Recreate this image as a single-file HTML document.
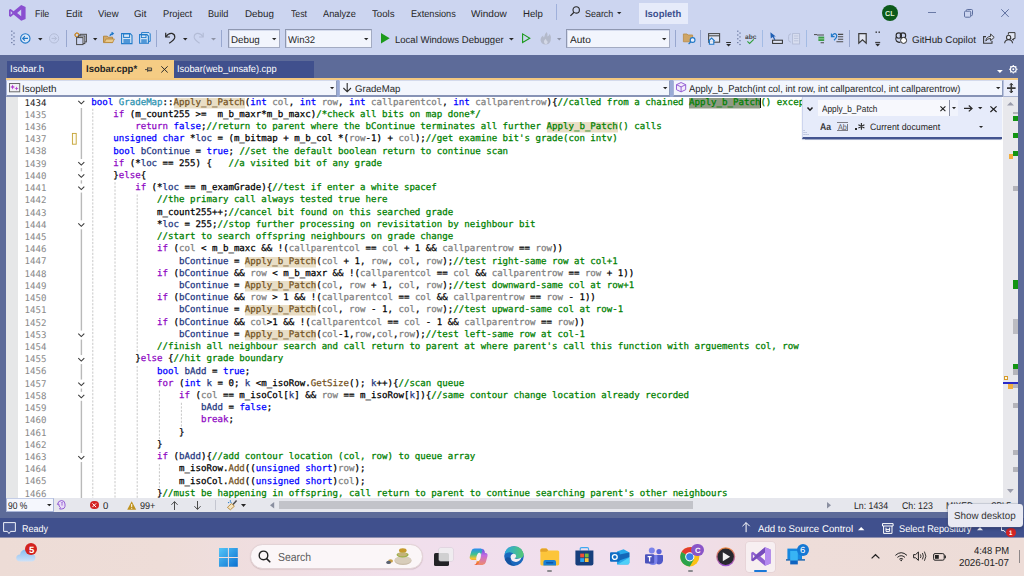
<!DOCTYPE html>
<html lang="en">
<head>
<meta charset="utf-8">
<title>Isopleth - Microsoft Visual Studio</title>
<style>
*{box-sizing:border-box;margin:0;padding:0}
html,body{width:1024px;height:576px;overflow:hidden;background:#5d6b99}
body{position:relative;font-family:"Liberation Sans",sans-serif;font-size:9.8px;color:#1e1e1e;text-rendering:geometricPrecision}
.abs{position:absolute}
i{font-style:normal}
b{font-weight:inherit}
svg{position:absolute;overflow:visible}
.t{position:absolute;white-space:nowrap;transform-origin:0 0;line-height:14px}
#top{position:absolute;left:0;top:0;width:1024px;height:55px;background:#ccd5f0}
#ed{position:absolute;left:6px;top:97px;width:997.3px;height:401.2px;background:#fff;overflow:hidden}
#code{position:absolute;left:85.3px;top:0;font-family:"DejaVu Sans Mono","Liberation Mono",monospace;font-size:9.126px;white-space:pre;color:#000;-webkit-text-stroke:0.25px currentColor}
.ln{position:absolute;left:0;height:12px;line-height:12px;white-space:pre}
#nums{position:absolute;left:0;top:0px}
.no{position:absolute;left:18.4px;width:22px;height:12px;line-height:12px;font-family:"DejaVu Sans Mono","Liberation Mono",monospace;font-size:9.126px;color:#8a8a8a;text-align:right}
.no.cur{color:#1e1e1e}
.k{color:#0000ff}.c{color:#8f08c4}.t2{color:#2b91af}.f{color:#74531f}.p{color:#808080}.l{color:#1f377f}.g{color:#008000}
.h{padding:1px 0 1.4px;background:linear-gradient(#e9dec6,#e9dec6) 0 0.8px/100% 10.5px no-repeat}
.hc{padding:1px 0 1.4px;background:linear-gradient(#8e9b83,#8e9b83) 0 0.8px/100% 10.5px no-repeat}
#ui{position:absolute;left:0;top:0;width:1024px;height:576px}
</style>
</head>
<body>
<div id="top"></div>
<div id="ed">
<div id="nums">
<div class="no cur" style="top:1px">1434</div>
<div class="no" style="top:13px">1435</div>
<div class="no" style="top:25px">1436</div>
<div class="no" style="top:37px">1437</div>
<div class="no" style="top:49px">1438</div>
<div class="no" style="top:62px">1439</div>
<div class="no" style="top:74px">1440</div>
<div class="no" style="top:86px">1441</div>
<div class="no" style="top:98px">1442</div>
<div class="no" style="top:111px">1443</div>
<div class="no" style="top:123px">1444</div>
<div class="no" style="top:135px">1445</div>
<div class="no" style="top:147px">1446</div>
<div class="no" style="top:159px">1447</div>
<div class="no" style="top:172px">1448</div>
<div class="no" style="top:184px">1449</div>
<div class="no" style="top:196px">1450</div>
<div class="no" style="top:208px">1451</div>
<div class="no" style="top:221px">1452</div>
<div class="no" style="top:233px">1453</div>
<div class="no" style="top:245px">1454</div>
<div class="no" style="top:257px">1455</div>
<div class="no" style="top:269px">1456</div>
<div class="no" style="top:282px">1457</div>
<div class="no" style="top:294px">1458</div>
<div class="no" style="top:306px">1459</div>
<div class="no" style="top:318px">1460</div>
<div class="no" style="top:331px">1461</div>
<div class="no" style="top:343px">1462</div>
<div class="no" style="top:355px">1463</div>
<div class="no" style="top:367px">1464</div>
<div class="no" style="top:379px">1465</div>
<div class="no" style="top:392px">1466</div>
</div>
<div id="code">
<div class="ln" style="top:0px"><i class="k">bool</i> <i class="t2">GradeMap</i>::<i class="f"><b class="h">Apply_b_Patch</b></i>(<i class="k">int</i> <i class="p">col</i>, <i class="k">int</i> <i class="p">row</i>, <i class="k">int</i> <i class="p">callparentcol</i>, <i class="k">int</i> <i class="p">callparentrow</i>){<i class="g">//called from a chained <b class="hc">Apply_b_Patch</b>() excep</i></div>
<div class="ln" style="top:12px">    <i class="c">if</i> (m_count255 &gt;=  m_b_maxr*m_b_maxc)<i class="g">/*check all bits on map done*/</i></div>
<div class="ln" style="top:24px">        <i class="c">return</i> <i class="k">false</i>;<i class="g">//return to parent where the bContinue terminates all further <b class="h">Apply_b_Patch</b>() calls</i></div>
<div class="ln" style="top:36px">    <i class="k">unsigned</i> <i class="k">char</i> *<i class="l">loc</i> = (m_bitmap + m_b_col *(<i class="p">row</i>-1) + <i class="p">col</i>);<i class="g">//get examine bit&#x27;s grade(con intv)</i></div>
<div class="ln" style="top:49px">    <i class="k">bool</i> <i class="l">bContinue</i> = <i class="k">true</i>; <i class="g">//set the default boolean return to continue scan</i></div>
<div class="ln" style="top:61px">    <i class="c">if</i> (*<i class="l">loc</i> == 255) {   <i class="g">//a visited bit of any grade</i></div>
<div class="ln" style="top:73px">    }<i class="c">else</i>{</div>
<div class="ln" style="top:85px">        <i class="c">if</i> (*<i class="l">loc</i> == m_examGrade){<i class="g">//test if enter a white spacef</i></div>
<div class="ln" style="top:97px">            <i class="g">//the primary call always tested true here</i></div>
<div class="ln" style="top:110px">            m_count255++;<i class="g">//cancel bit found on this searched grade</i></div>
<div class="ln" style="top:122px">            *<i class="l">loc</i> = 255;<i class="g">//stop further processing on revisitation by neighbour bit</i></div>
<div class="ln" style="top:134px">            <i class="g">//start to search offspring neighbours on grade change</i></div>
<div class="ln" style="top:146px">            <i class="c">if</i> (<i class="p">col</i> &lt; m_b_maxc &amp;&amp; !(<i class="p">callparentcol</i> == <i class="p">col</i> + 1 &amp;&amp; <i class="p">callparentrow</i> == <i class="p">row</i>))</div>
<div class="ln" style="top:159px">                <i class="l">bContinue</i> = <i class="f"><b class="h">Apply_b_Patch</b></i>(<i class="p">col</i> + 1, <i class="p">row</i>, <i class="p">col</i>, <i class="p">row</i>);<i class="g">//test right-same row at col+1</i></div>
<div class="ln" style="top:171px">            <i class="c">if</i> (<i class="l">bContinue</i> &amp;&amp; <i class="p">row</i> &lt; m_b_maxr &amp;&amp; !(<i class="p">callparentcol</i> == <i class="p">col</i> &amp;&amp; <i class="p">callparentrow</i> == <i class="p">row</i> + 1))</div>
<div class="ln" style="top:183px">                <i class="l">bContinue</i> = <i class="f"><b class="h">Apply_b_Patch</b></i>(<i class="p">col</i>, <i class="p">row</i> + 1, <i class="p">col</i>, <i class="p">row</i>);<i class="g">//test downward-same col at row+1</i></div>
<div class="ln" style="top:195px">            <i class="c">if</i> (<i class="l">bContinue</i> &amp;&amp; <i class="p">row</i> &gt; 1 &amp;&amp; !(<i class="p">callparentcol</i> == <i class="p">col</i> &amp;&amp; <i class="p">callparentrow</i> == <i class="p">row</i> - 1))</div>
<div class="ln" style="top:207px">                <i class="l">bContinue</i> = <i class="f"><b class="h">Apply_b_Patch</b></i>(<i class="p">col</i>, <i class="p">row</i> - 1, <i class="p">col</i>, <i class="p">row</i>);<i class="g">//test upward-same col at row-1</i></div>
<div class="ln" style="top:220px">            <i class="c">if</i> (<i class="l">bContinue</i> &amp;&amp; <i class="p">col</i>&gt;1 &amp;&amp; !(<i class="p">callparentcol</i> == <i class="p">col</i> - 1 &amp;&amp; <i class="p">callparentrow</i> == <i class="p">row</i>))</div>
<div class="ln" style="top:232px">                <i class="l">bContinue</i> = <i class="f"><b class="h">Apply_b_Patch</b></i>(<i class="p">col</i>-1,<i class="p">row</i>,<i class="p">col</i>,<i class="p">row</i>);<i class="g">//test left-same row at col-1</i></div>
<div class="ln" style="top:244px">            <i class="g">//finish all neighbour search and call return to parent at where parent&#x27;s call this function with arguements col, row</i></div>
<div class="ln" style="top:256px">        }<i class="c">else</i> {<i class="g">//hit grade boundary</i></div>
<div class="ln" style="top:269px">            <i class="k">bool</i> <i class="l">bAdd</i> = <i class="k">true</i>;</div>
<div class="ln" style="top:281px">            <i class="c">for</i> (<i class="k">int</i> <i class="l">k</i> = 0; <i class="l">k</i> &lt;m_isoRow.<i class="f">GetSize</i>(); <i class="l">k</i>++){<i class="g">//scan queue</i></div>
<div class="ln" style="top:293px">                <i class="c">if</i> (<i class="p">col</i> == m_isoCol[<i class="l">k</i>] &amp;&amp; <i class="p">row</i> == m_isoRow[<i class="l">k</i>]){<i class="g">//same contour change location already recorded</i></div>
<div class="ln" style="top:305px">                    <i class="l">bAdd</i> = <i class="k">false</i>;</div>
<div class="ln" style="top:317px">                    <i class="c">break</i>;</div>
<div class="ln" style="top:330px">                }</div>
<div class="ln" style="top:342px">            }</div>
<div class="ln" style="top:354px">            <i class="c">if</i> (<i class="l">bAdd</i>){<i class="g">//add contour location (col, row) to queue array</i></div>
<div class="ln" style="top:366px">                m_isoRow.<i class="f">Add</i>((<i class="k">unsigned</i> <i class="k">short</i>)<i class="p">row</i>);</div>
<div class="ln" style="top:379px">                m_isoCol.<i class="f">Add</i>((<i class="k">unsigned</i> <i class="k">short</i>)<i class="p">col</i>);</div>
<div class="ln" style="top:391px">            }<i class="g">//must be happening in offspring, call return to parent to continue searching parent&#x27;s other neighbours</i></div>
</div>
</div>
<div id="ui">
<!-- menu -->
<svg style="left:9.40px;top:5.00px;" width="16.60" height="15.80" viewBox="0 0 16.60 15.80"><path d="M12.2 0 L16.6 1.9 V13.9 L12.2 15.8 L4.6 9.6 L1.6 11.9 L0 11.1 V4.7 L1.6 3.9 L4.6 6.2 Z M12.2 4.6 L8.1 7.9 L12.2 11.2 Z M1.7 6.1 V9.7 L3.5 7.9 Z" fill="#8a4fd0" fill-rule="evenodd"/></svg>
<span class="t" style="top:8px;font-size:9.80px;color:#262626;left:35.11px;transform:scaleX(0.9045);">File</span>
<span class="t" style="top:8px;font-size:9.80px;color:#262626;left:65.51px;transform:scaleX(0.9702);">Edit</span>
<span class="t" style="top:8px;font-size:9.80px;color:#262626;left:97.71px;transform:scaleX(0.9772);">View</span>
<span class="t" style="top:8px;font-size:9.80px;color:#262626;left:134.01px;transform:scaleX(0.9889);">Git</span>
<span class="t" style="top:8px;font-size:9.80px;color:#262626;left:162.51px;transform:scaleX(0.9552);">Project</span>
<span class="t" style="top:8px;font-size:9.80px;color:#262626;left:208.11px;transform:scaleX(0.9354);">Build</span>
<span class="t" style="top:8px;font-size:9.80px;color:#262626;left:245.21px;transform:scaleX(1.0019);">Debug</span>
<span class="t" style="top:8px;font-size:9.80px;color:#262626;left:290.86px;transform:scaleX(0.8921);">Test</span>
<span class="t" style="top:8px;font-size:9.80px;color:#262626;left:323.11px;transform:scaleX(0.9432);">Analyze</span>
<span class="t" style="top:8px;font-size:9.80px;color:#262626;left:371.86px;transform:scaleX(0.9849);">Tools</span>
<span class="t" style="top:8px;font-size:9.80px;color:#262626;left:410.61px;transform:scaleX(0.9342);">Extensions</span>
<span class="t" style="top:8px;font-size:9.80px;color:#262626;left:471.21px;transform:scaleX(1.0266);">Window</span>
<span class="t" style="top:8px;font-size:9.80px;color:#262626;left:523.11px;transform:scaleX(0.9816);">Help</span>
<div class="abs" style="left:556.30px;top:4.00px;width:1.00px;height:15.80px;background:#9fb0db;"></div>
<svg style="left:570.00px;top:6.20px;" width="10.00" height="10.20" viewBox="0 0 10.00 10.20"><circle cx="6.2" cy="3.9" r="3.2" fill="none" stroke="#2a2a2a" stroke-width="1.1"/><path d="M4 6.3 L0.4 9.9" stroke="#2a2a2a" stroke-width="1.2" fill="none"/></svg>
<span class="t" style="top:8px;font-size:9.80px;color:#262626;left:584.61px;transform:scaleX(0.9109);">Search</span>
<svg style="left:617.30px;top:11.90px;" width="4.40" height="2.20" viewBox="0 0 4.40 2.20"><polygon points="0,0 4.40,0 2.20,2.20" fill="#262626"/></svg>
<div class="abs" style="left:639.00px;top:3.00px;width:48.80px;height:20.80px;background:#e6ebfa;"></div>
<span class="t" style="top:8px;font-size:9.80px;color:#3c4f8e;font-weight:bold;left:645.21px;transform:scaleX(0.9631);">Isopleth</span>
<div class="abs" style="left:881.8px;top:4.8px;width:16.4px;height:16.4px;border-radius:50%;background:#0c5a1b"></div>
<span class="t" style="top:7px;font-size:7.20px;color:#dff0d8;font-weight:bold;left:885.31px;transform:scaleX(0.9977);">CL</span>
<div class="abs" style="left:927.90px;top:12.30px;width:8.10px;height:1.00px;background:#6a7aa6;"></div>
<svg style="left:964.00px;top:9.00px;" width="9.00" height="8.60" viewBox="0 0 9.00 8.60"><rect x="0.5" y="2.2" width="6.2" height="6" rx="1" fill="none" stroke="#5c6d9e" stroke-width="1"/><path d="M2.3 2 V1.5 Q2.3 0.5 3.3 0.5 H7.5 Q8.5 0.5 8.5 1.5 V5.6 Q8.5 6.6 7.5 6.6 H7" fill="none" stroke="#5c6d9e" stroke-width="1"/></svg>
<svg style="left:1001.40px;top:9.00px;" width="8.00" height="8.20" viewBox="0 0 8.00 8.20"><path d="M0.3 0.3 L7.7 7.9 M7.7 0.3 L0.3 7.9" stroke="#5c6d9e" stroke-width="1" fill="none"/></svg>
<!-- toolbar -->
<svg style="left:10.00px;top:30.00px;" width="4.80" height="15.60" viewBox="0 0 4.80 15.60"><rect x="1.2" y="0.6" width="1.2" height="1.2" fill="#5f6e98"/><rect x="3.4" y="2.5" width="1.2" height="1.2" fill="#5f6e98"/><rect x="1.2" y="4.4" width="1.2" height="1.2" fill="#5f6e98"/><rect x="3.4" y="6.3" width="1.2" height="1.2" fill="#5f6e98"/><rect x="1.2" y="8.2" width="1.2" height="1.2" fill="#5f6e98"/><rect x="3.4" y="10.1" width="1.2" height="1.2" fill="#5f6e98"/><rect x="1.2" y="12.0" width="1.2" height="1.2" fill="#5f6e98"/><rect x="3.4" y="13.9" width="1.2" height="1.2" fill="#5f6e98"/></svg>
<svg style="left:20.40px;top:33.00px;" width="10.60" height="10.80" viewBox="0 0 10.60 10.80"><circle cx="5.3" cy="5.4" r="4.7" fill="#dbe7f8" stroke="#1f78c8" stroke-width="1.1"/><path d="M8 5.4 H2.9 M4.9 3.2 L2.7 5.4 L4.9 7.6" stroke="#1f78c8" stroke-width="1.1" fill="none"/></svg>
<svg style="left:37.90px;top:37.90px;" width="4.60" height="2.40" viewBox="0 0 4.60 2.40"><polygon points="0,0 4.60,0 2.30,2.40" fill="#262626"/></svg>
<svg style="left:49.00px;top:33.00px;" width="10.20" height="10.80" viewBox="0 0 10.20 10.80"><circle cx="5.1" cy="5.4" r="4.6" fill="none" stroke="#b3bcd6" stroke-width="1"/><path d="M2.6 5.4 H7.4 M5.4 3.3 L7.5 5.4 L5.4 7.5" stroke="#b3bcd6" stroke-width="1" fill="none"/></svg>
<div class="abs" style="left:65.80px;top:30.00px;width:1.00px;height:17.30px;background:#98a7cf;"></div>
<svg style="left:74.00px;top:32.30px;" width="13.00" height="13.10" viewBox="0 0 13.00 13.10"><circle cx="2.9" cy="3" r="1.8" fill="none" stroke="#c98a2c" stroke-width="1.2"/><path d="M2.9 0 V1 M2.9 5 V6 M0 3 H1 M4.9 3 H5.9 M0.9 1 L1.6 1.7 M4.3 4.4 L5 5.1 M0.9 5 L1.6 4.3 M4.3 1.7 L5 1" stroke="#c98a2c" stroke-width="0.9"/><rect x="6" y="2.3" width="6.4" height="7.6" fill="#ccd5f0" stroke="#4a4a4a" stroke-width="1"/><rect x="4.4" y="4" width="6.4" height="7.6" fill="#e4e8f4" stroke="#4a4a4a" stroke-width="1"/><rect x="2.6" y="5.6" width="6.4" height="7" fill="#ccd5f0" stroke="#4a4a4a" stroke-width="1"/></svg>
<svg style="left:92.50px;top:37.90px;" width="4.40" height="2.40" viewBox="0 0 4.40 2.40"><polygon points="0,0 4.40,0 2.20,2.40" fill="#262626"/></svg>
<svg style="left:102.70px;top:32.00px;" width="11.90" height="11.20" viewBox="0 0 11.90 11.20"><path d="M0.5 4.2 H4.2 L5.2 5.2 H9.6 V10.6 H0.5 Z" fill="#d2a869" stroke="#b08236" stroke-width="0.9"/><path d="M1.4 10.4 L3 7 H11.4 L9.6 10.6 Z" fill="#e8c98f" stroke="#b98838" stroke-width="0.8"/><path d="M7 4 Q7.4 1.6 10 1.6 M8.6 0.2 L10.4 1.6 L8.6 3.2" fill="none" stroke="#1f78c8" stroke-width="1.1"/></svg>
<svg style="left:121.20px;top:32.80px;" width="11.60" height="11.20" viewBox="0 0 11.60 11.20"><path d="M0.6 0.6 H9.20 L11.00 2.4 V10.60 H0.6 Z" fill="#d6e6f7" stroke="#1f7ac9" stroke-width="1.1"/><rect x="2.6" y="0.8" width="6.00" height="3.6" fill="none" stroke="#1f7ac9" stroke-width="1"/><rect x="2.4" y="6.00" width="6.80" height="4.40" fill="#4f97d8"/></svg>
<svg style="left:139.00px;top:32.40px;" width="11.80" height="11.80" viewBox="0 0 11.80 11.80"><path d="M2.6 2 V0.6 H10 L11.2 1.8 V9.4 H9.6" fill="#d6e6f7" stroke="#1f7ac9" stroke-width="1"/><path d="M0.6 2.6 H8 L9.4 4 V11.2 H0.6 Z" fill="#d6e6f7" stroke="#1f7ac9" stroke-width="1.1"/><rect x="2.4" y="2.8" width="4.6" height="2.8" fill="none" stroke="#1f7ac9" stroke-width="0.9"/><rect x="2.2" y="7.2" width="5.6" height="3.8" fill="#4f97d8"/></svg>
<div class="abs" style="left:156.10px;top:30.00px;width:1.00px;height:17.30px;background:#98a7cf;"></div>
<svg style="left:164.70px;top:32.20px;" width="10.50" height="11.70" viewBox="0 0 10.50 11.70"><path d="M0.7 0.8 V5 H4.9" fill="none" stroke="#2b2b2b" stroke-width="1.2"/><path d="M0.9 4.8 Q3.4 0.9 7 1.4 Q10 2.2 9.8 5.4 Q9.4 8 4.2 11.3" fill="none" stroke="#2b2b2b" stroke-width="1.2"/></svg>
<svg style="left:182.50px;top:37.90px;" width="4.50" height="2.40" viewBox="0 0 4.50 2.40"><polygon points="0,0 4.50,0 2.25,2.40" fill="#262626"/></svg>
<svg style="left:194.40px;top:32.20px;" width="9.80" height="11.70" viewBox="0 0 9.80 11.70"><path d="M9.2 0.8 V5 H5" fill="none" stroke="#b3bcd6" stroke-width="1.1"/><path d="M9 4.8 Q6.6 0.9 3 1.4 Q0 2.2 0.2 5.4 Q0.6 8 5.6 11.3" fill="none" stroke="#b3bcd6" stroke-width="1.1"/></svg>
<svg style="left:211.20px;top:37.90px;" width="5.00" height="2.40" viewBox="0 0 5.00 2.40"><polygon points="0,0 5.00,0 2.50,2.40" fill="#8d93a6"/></svg>
<div class="abs" style="left:220.80px;top:30.00px;width:1.00px;height:17.30px;background:#98a7cf;"></div>
<div class="abs" style="left:228.10px;top:29.4px;width:51.70px;height:19.1px;background:#f2f5fd;border:1px solid #a3abc2;border-top-color:#8f98b1;border-left-color:#8f98b1;border-bottom:1.4px solid #a3abc2;box-shadow:inset 1px 1px 0 #d5dbed"></div><span class="t" style="top:34px;font-size:9.80px;color:#262626;left:231.21px;transform:scaleX(0.9967);">Debug</span><svg style="left:271.90px;top:37.90px;" width="4.40" height="2.30" viewBox="0 0 4.40 2.30"><polygon points="0,0 4.40,0 2.20,2.30" fill="#262626"/></svg>
<div class="abs" style="left:285.20px;top:29.4px;width:87.30px;height:19.1px;background:#f2f5fd;border:1px solid #a3abc2;border-top-color:#8f98b1;border-left-color:#8f98b1;border-bottom:1.4px solid #a3abc2;box-shadow:inset 1px 1px 0 #d5dbed"></div><span class="t" style="top:34px;font-size:9.80px;color:#262626;left:288.11px;transform:scaleX(0.9750);">Win32</span><svg style="left:364.40px;top:37.90px;" width="4.40" height="2.30" viewBox="0 0 4.40 2.30"><polygon points="0,0 4.40,0 2.20,2.30" fill="#262626"/></svg>
<svg style="left:381.20px;top:33.40px;" width="8.70" height="10.40" viewBox="0 0 8.70 10.40"><polygon points="0,0 8.7,5.2 0,10.4" fill="#1c9a1c"/></svg>
<span class="t" style="top:34px;font-size:9.80px;color:#262626;left:395.21px;transform:scaleX(0.9732);">Local Windows Debugger</span>
<svg style="left:509.40px;top:37.60px;" width="4.80" height="2.50" viewBox="0 0 4.80 2.50"><polygon points="0,0 4.80,0 2.40,2.50" fill="#262626"/></svg>
<svg style="left:521.60px;top:33.00px;" width="8.60" height="10.40" viewBox="0 0 8.60 10.40"><polygon points="0.6,0.9 7.8,5.2 0.6,9.5" fill="none" stroke="#1c9a1c" stroke-width="1.1"/></svg>
<svg style="left:540.00px;top:32.40px;" width="11.40" height="12.80" viewBox="0 0 11.40 12.80"><path d="M6.6 0 Q8.4 2.6 7.4 4.4 Q9.6 3.6 9.8 1.8 Q12 5.4 10.6 9 Q9.2 12.6 5.6 12.6 Q1.4 12.4 0.6 8.6 Q0.2 5.4 3.2 3.4 Q3 5 4 5.6 Q4.4 2.2 6.6 0 Z" fill="#b4bacb"/><path d="M5.8 12.4 Q3.4 11.4 4 9 Q4.6 7.6 6 6.8 Q6 8.4 7.4 9.2 Q8.4 11 5.8 12.4Z" fill="#d3d8e6"/></svg>
<svg style="left:556.90px;top:37.90px;" width="4.50" height="2.40" viewBox="0 0 4.50 2.40"><polygon points="0,0 4.50,0 2.25,2.40" fill="#8d93a6"/></svg>
<div class="abs" style="left:566.30px;top:29.4px;width:103.30px;height:19.1px;background:#f2f5fd;border:1px solid #a3abc2;border-top-color:#8f98b1;border-left-color:#8f98b1;border-bottom:1.4px solid #a3abc2;box-shadow:inset 1px 1px 0 #d5dbed"></div><span class="t" style="top:34px;font-size:9.80px;color:#262626;left:569.61px;transform:scaleX(1.0309);">Auto</span><svg style="left:662.00px;top:37.90px;" width="4.40" height="2.30" viewBox="0 0 4.40 2.30"><polygon points="0,0 4.40,0 2.20,2.30" fill="#262626"/></svg>
<div class="abs" style="left:674.90px;top:30.00px;width:1.00px;height:17.30px;background:#98a7cf;"></div>
<svg style="left:683.00px;top:33.40px;" width="12.80" height="11.20" viewBox="0 0 12.80 11.20"><path d="M0.4 1 H4 L5 2 H9.6 V8.8 H0.4 Z" fill="#cfa566" stroke="#b98c46" stroke-width="0.8"/><circle cx="9.6" cy="7" r="2.4" fill="#e8eefb" stroke="#1f78c8" stroke-width="1.1"/><path d="M7.8 8.8 L5.6 11" stroke="#1f78c8" stroke-width="1.2"/></svg>
<div class="abs" style="left:700.00px;top:30.00px;width:1.00px;height:17.30px;background:#98a7cf;"></div>
<svg style="left:708.00px;top:33.00px;" width="12.20" height="11.60" viewBox="0 0 12.20 11.60"><rect x="0.6" y="0.6" width="11" height="8.6" fill="#dfe5f5" stroke="#4a4a4a" stroke-width="1.1"/><path d="M0.6 2.8 H11.6" stroke="#4a4a4a" stroke-width="1.1"/><path d="M0.4 8.2 L3.6 5 L6.8 8.2 M1.4 7.6 V11.2 H5.8 V7.6" fill="#e8eefb" stroke="#1f78c8" stroke-width="1.1"/></svg>
<svg style="left:726.20px;top:42.00px;" width="5.20" height="4.60" viewBox="0 0 5.20 4.60"><path d="M0.2 0.5 H5" stroke="#2b2b2b" stroke-width="1"/><polygon points="0.2,2 5,2 2.6,4.6" fill="#2b2b2b"/></svg>
<svg style="left:736.00px;top:30.00px;" width="4.80" height="15.60" viewBox="0 0 4.80 15.60"><rect x="1.2" y="0.6" width="1.2" height="1.2" fill="#5f6e98"/><rect x="3.4" y="2.5" width="1.2" height="1.2" fill="#5f6e98"/><rect x="1.2" y="4.4" width="1.2" height="1.2" fill="#5f6e98"/><rect x="3.4" y="6.3" width="1.2" height="1.2" fill="#5f6e98"/><rect x="1.2" y="8.2" width="1.2" height="1.2" fill="#5f6e98"/><rect x="3.4" y="10.1" width="1.2" height="1.2" fill="#5f6e98"/><rect x="1.2" y="12.0" width="1.2" height="1.2" fill="#5f6e98"/><rect x="3.4" y="13.9" width="1.2" height="1.2" fill="#5f6e98"/></svg>
<span class="t" style="top:31px;font-size:6.60px;color:#4a4a4a;font-weight:bold;left:744.94px;transform:scaleX(0.9960);">abc</span>
<svg style="left:747.40px;top:39.00px;" width="7.20" height="5.00" viewBox="0 0 7.20 5.00"><path d="M0.4 2.4 L2.6 4.4 L6.8 0.4" fill="none" stroke="#2f9e3a" stroke-width="1.1"/></svg>
<div class="abs" style="left:762.10px;top:30.00px;width:1.00px;height:17.30px;background:#a3bbe4;"></div>
<svg style="left:770.00px;top:32.20px;" width="12.80" height="11.80" viewBox="0 0 12.80 11.80"><path d="M0.4 0.2 L0.8 6.6 L2.6 5 L4.4 8 L5.4 7.4 L3.8 4.6 L5.8 4.4 Z" fill="#1f5fb4"/><rect x="2.6" y="8.2" width="9.8" height="3.2" fill="#dfe5f5" stroke="#2b2b2b" stroke-width="1"/></svg>
<svg style="left:788.00px;top:33.00px;" width="12.20" height="11.40" viewBox="0 0 12.20 11.40"><path d="M3 0.8 Q0.6 1 0.6 3.4 V6.6 Q0.6 9 3 9.2" fill="none" stroke="#b3bcd6" stroke-width="1"/><rect x="4.6" y="0.6" width="7" height="10.4" fill="#d8def0" stroke="#b3bcd6" stroke-width="0.9"/><path d="M6 3 H10.4 M6 5.4 H10.4 M6 7.8 H10.4" stroke="#b9c1da" stroke-width="0.9"/></svg>
<div class="abs" style="left:805.50px;top:30.00px;width:1.00px;height:17.30px;background:#a3bbe4;"></div>
<svg style="left:814.00px;top:33.60px;" width="10.20" height="9.80" viewBox="0 0 10.20 9.80"><path d="M0 0.6 H3" stroke="#4a4a4a" stroke-width="1"/><path d="M3 1 H10 M6.6 8.8 H10" stroke="#4a4a4a" stroke-width="1.1"/><rect x="4.4" y="2.6" width="5.8" height="4.4" fill="#3a9d46"/><path d="M4.4 4.8 H10.2" stroke="#cfe8d2" stroke-width="0.6"/></svg>
<svg style="left:831.00px;top:32.40px;" width="12.40" height="11.40" viewBox="0 0 12.40 11.40"><path d="M0.4 1.4 V4.6 H3.6" fill="none" stroke="#1f78c8" stroke-width="1.1"/><path d="M0.6 4.2 Q3.2 0.4 5.2 2.4 Q7 5 3 8.2" fill="none" stroke="#1f78c8" stroke-width="1.2"/><path d="M7 2.4 H12.2 M7 4.8 H12.2 M7 7.2 H12.2 M5.4 9.8 H12.2" stroke="#4a4a4a" stroke-width="1.1"/></svg>
<div class="abs" style="left:848.50px;top:30.00px;width:1.00px;height:17.30px;background:#98a7cf;"></div>
<svg style="left:858.00px;top:32.80px;" width="9.20" height="11.00" viewBox="0 0 9.20 11.00"><path d="M0.8 0.6 H8.2 V10.2 L4.5 6.8 L0.8 10.2 Z" fill="#e2e6f2" stroke="#3a3a3a" stroke-width="1.2"/></svg>
<svg style="left:875.00px;top:31.00px;" width="5.40" height="16.00" viewBox="0 0 5.40 16.00"><rect x="0.6" y="0.4" width="1.2" height="1.6" fill="#2b2b2b"/><rect x="3.6" y="0.4" width="1.2" height="1.6" fill="#2b2b2b"/><path d="M0.2 11.4 H5.2" stroke="#2b2b2b" stroke-width="1"/><polygon points="0.2,12.8 5.2,12.8 2.7,15.6" fill="#2b2b2b"/></svg>
<svg style="left:895.00px;top:32.00px;" width="12.40" height="12.00" viewBox="0 0 12.40 12.00"><circle cx="3.8" cy="3.6" r="2.7" fill="none" stroke="#2b2b2b" stroke-width="1.1"/><circle cx="8" cy="3.6" r="2.7" fill="none" stroke="#2b2b2b" stroke-width="1.1"/><path d="M1.2 5 Q0.2 7.4 1.4 9 Q3.4 10.6 5.4 10.4" fill="none" stroke="#2b2b2b" stroke-width="1.1"/><circle cx="8.6" cy="8.4" r="3" fill="#fff" stroke="#2b2b2b" stroke-width="1"/></svg>
<span class="t" style="top:34px;font-size:9.80px;color:#262626;left:911.91px;transform:scaleX(1.0024);">GitHub Copilot</span>
<svg style="left:983.40px;top:32.60px;" width="11.80" height="10.80" viewBox="0 0 11.80 10.80"><path d="M3 3.6 H0.6 V10.2 H9 V8" fill="none" stroke="#3a3a3a" stroke-width="1.1"/><path d="M2.8 8 Q3.4 3.6 7.6 3.4 V1 L11.2 4.4 L7.6 7.6 V5.4 Q4.4 5.4 2.8 8Z" fill="#e2e6f2" stroke="#3a3a3a" stroke-width="1"/></svg>
<svg style="left:1004.00px;top:32.00px;" width="11.60" height="11.40" viewBox="0 0 11.60 11.40"><path d="M4.4 2.6 V0.6 H11 V6.6 H9.4 V8.2 L7.8 6.8" fill="#e2e6f2" stroke="#3a3a3a" stroke-width="1"/><circle cx="4.6" cy="5.4" r="2.1" fill="#e2e6f2" stroke="#3a3a3a" stroke-width="1.1"/><path d="M0.6 11.2 Q1 7.8 4.6 7.8 Q8.2 7.8 8.6 11.2" fill="none" stroke="#3a3a3a" stroke-width="1.1"/></svg>
<!-- tabs -->
<div class="abs" style="left:6.90px;top:61.00px;width:75.10px;height:16.80px;background:#40508d;"></div>
<span class="t" style="top:63px;font-size:9.80px;color:#ffffff;left:10.21px;transform:scaleX(0.9803);">Isobar.h</span>
<div class="abs" style="left:82.00px;top:59.80px;width:91.50px;height:18.20px;background:#f5cc84;"></div>
<span class="t" style="top:63px;font-size:9.80px;color:#262626;font-weight:bold;left:85.61px;transform:scaleX(0.9669);">Isobar.cpp*</span>
<svg style="left:145.00px;top:67.40px;" width="7.20" height="5.20" viewBox="0 0 7.20 5.20"><path d="M0 2.6 H2.6 M2.6 0.4 V4.8 M2.8 1 H6.6 V3.8 H2.8 M3 3.2 H6.6" fill="none" stroke="#3a3a3a" stroke-width="0.9"/></svg>
<svg style="left:161.00px;top:66.20px;" width="7.00" height="6.80" viewBox="0 0 7.00 6.80"><path d="M0.3 0.3 L6.7 6.5 M6.7 0.3 L0.3 6.5" stroke="#2b2b2b" stroke-width="1" fill="none"/></svg>
<div class="abs" style="left:173.50px;top:61.00px;width:140.30px;height:16.80px;background:#40508d;"></div>
<span class="t" style="top:63px;font-size:9.80px;color:#ffffff;left:177.41px;transform:scaleX(0.9471);">Isobar(web_unsafe).cpp</span>
<svg style="left:996.60px;top:69.80px;" width="5.80" height="3.00" viewBox="0 0 5.80 3.00"><polygon points="0,0 5.80,0 2.90,3.00" fill="#ffffff"/></svg>
<svg style="left:1009.40px;top:65.40px;" width="8.60" height="8.60" viewBox="0 0 8.60 8.60"><circle cx="4.3" cy="4.3" r="2.9" fill="none" stroke="#fff" stroke-width="1.1"/><circle cx="4.3" cy="4.3" r="1" fill="#fff"/><path d="M4.3 0 V1.4 M4.3 7.2 V8.6 M0 4.3 H1.4 M7.2 4.3 H8.6 M1.3 1.3 L2.2 2.2 M6.4 6.4 L7.3 7.3 M1.3 7.3 L2.2 6.4 M6.4 2.2 L7.3 1.3" stroke="#fff" stroke-width="1.1"/></svg>
<div class="abs" style="left:6.00px;top:77.70px;width:1012.40px;height:2.20px;background:#f3c880;"></div>
<!-- nav -->
<div class="abs" style="left:6.00px;top:79.90px;width:1012.00px;height:17.60px;background:#9aabd6;"></div>
<div class="abs" style="left:6.30px;top:79.9px;width:330.50px;height:17.6px;background:#f3f6fd;border-bottom:2px solid #8793b6;border-left:1px solid #a9b5d8;border-right:1px solid #8e9bbc;border-top:1px solid #d4daec"></div>
<div class="abs" style="left:339.40px;top:79.9px;width:330.50px;height:17.6px;background:#f3f6fd;border-bottom:2px solid #8793b6;border-left:1px solid #a9b5d8;border-right:1px solid #8e9bbc;border-top:1px solid #d4daec"></div>
<div class="abs" style="left:672.80px;top:79.9px;width:329.80px;height:17.6px;background:#f3f6fd;border-bottom:2px solid #8793b6;border-left:1px solid #a9b5d8;border-right:1px solid #8e9bbc;border-top:1px solid #d4daec"></div>
<svg style="left:9.00px;top:82.70px;" width="11.20" height="9.30" viewBox="0 0 11.20 9.30"><rect x="0.5" y="0.5" width="10.2" height="8.3" fill="#f0f0f4" stroke="#6a6a6a" stroke-width="1"/><path d="M3.6 1.6 L4.3 3.3 L6 4 L4.3 4.7 L3.6 6.4 L2.9 4.7 L1.2 4 L2.9 3.3 Z" fill="#b23bd0"/><path d="M7.6 3.4 L8.2 4.9 L9.7 5.5 L8.2 6.1 L7.6 7.6 L7 6.1 L5.5 5.5 L7 4.9 Z" fill="#b23bd0"/></svg>
<span class="t" style="top:83px;font-size:9.80px;color:#262626;left:22.11px;transform:scaleX(1.0075);">Isopleth</span>
<svg style="left:330.00px;top:86.90px;" width="4.20" height="2.20" viewBox="0 0 4.20 2.20"><polygon points="0,0 4.20,0 2.10,2.20" fill="#262626"/></svg>
<svg style="left:343.00px;top:83.40px;" width="8.40" height="9.40" viewBox="0 0 8.40 9.40"><path d="M4.2 0 V8.6 M0.4 5 L4.2 8.8 L8 5" fill="none" stroke="#2b2b2b" stroke-width="1.1"/></svg>
<span class="t" style="top:83px;font-size:9.80px;color:#262626;left:355.21px;transform:scaleX(0.9802);">GradeMap</span>
<svg style="left:663.00px;top:86.90px;" width="4.40" height="2.20" viewBox="0 0 4.40 2.20"><polygon points="0,0 4.40,0 2.20,2.20" fill="#262626"/></svg>
<svg style="left:676.00px;top:82.20px;" width="10.20" height="10.40" viewBox="0 0 10.20 10.40"><path d="M5.1 0.5 L9.7 2.7 V7.7 L5.1 9.9 L0.5 7.7 V2.7 Z" fill="#f3ecfb" stroke="#8a4fd0" stroke-width="0.9"/><path d="M0.5 2.7 L5.1 4.9 L9.7 2.7 M5.1 4.9 V9.9" fill="none" stroke="#8a4fd0" stroke-width="0.9"/></svg>
<span class="t" style="top:83px;font-size:9.80px;color:#262626;left:689.01px;transform:scaleX(0.9625);">Apply_b_Patch(int col, int row, int callparentcol, int callparentrow)</span>
<svg style="left:996.00px;top:86.90px;" width="4.40" height="2.20" viewBox="0 0 4.40 2.20"><polygon points="0,0 4.40,0 2.20,2.20" fill="#262626"/></svg>
<div class="abs" style="left:1003.20px;top:79.90px;width:14.80px;height:17.60px;background:#e8ecfa;border-bottom:1.6px solid #a9b3d0;border-left:1px solid #b9c3e0"></div>
<svg style="left:1007.00px;top:83.00px;" width="8.60" height="10.20" viewBox="0 0 8.60 10.20"><path d="M4.3 0.4 V9.8 M0 5.1 H8.6" stroke="#3a3a3a" stroke-width="1.6"/><path d="M2.6 2.2 L4.3 0.3 L6 2.2 M2.6 8 L4.3 9.9 L6 8" fill="none" stroke="#3a3a3a" stroke-width="1"/></svg>
<!-- gutter -->
<div class="abs" style="left:6.00px;top:97.00px;width:11.60px;height:401.20px;background:#e6e7e8;"></div>
<svg style="left:0;top:0" width="1024" height="576" viewBox="0 0 1024 576"><path d="M81.4 108 V498.5" stroke="#b9b9b9" stroke-width="1.4"/><rect x="77" y="97.80" width="9" height="9" fill="#fff"/><path d="M78.3 100.80 L81.3 103.80 L84.3 100.80" fill="none" stroke="#3c3c3c" stroke-width="1.1"/><rect x="77" y="159.05" width="9" height="9" fill="#fff"/><path d="M78.3 162.05 L81.3 165.05 L84.3 162.05" fill="none" stroke="#3c3c3c" stroke-width="1.1"/><rect x="77" y="171.30" width="9" height="9" fill="#fff"/><path d="M78.3 174.30 L81.3 177.30 L84.3 174.30" fill="none" stroke="#3c3c3c" stroke-width="1.1"/><rect x="77" y="183.55" width="9" height="9" fill="#fff"/><path d="M78.3 186.55 L81.3 189.55 L84.3 186.55" fill="none" stroke="#3c3c3c" stroke-width="1.1"/><rect x="77" y="220.30" width="9" height="9" fill="#fff"/><path d="M78.3 223.30 L81.3 226.30 L84.3 223.30" fill="none" stroke="#3c3c3c" stroke-width="1.1"/><rect x="77" y="330.55" width="9" height="9" fill="#fff"/><path d="M78.3 333.55 L81.3 336.55 L84.3 333.55" fill="none" stroke="#3c3c3c" stroke-width="1.1"/><rect x="77" y="355.05" width="9" height="9" fill="#fff"/><path d="M78.3 358.05 L81.3 361.05 L84.3 358.05" fill="none" stroke="#3c3c3c" stroke-width="1.1"/><rect x="77" y="379.55" width="9" height="9" fill="#fff"/><path d="M78.3 382.55 L81.3 385.55 L84.3 382.55" fill="none" stroke="#3c3c3c" stroke-width="1.1"/><rect x="77" y="391.80" width="9" height="9" fill="#fff"/><path d="M78.3 394.80 L81.3 397.80 L84.3 394.80" fill="none" stroke="#3c3c3c" stroke-width="1.1"/><rect x="77" y="453.05" width="9" height="9" fill="#fff"/><path d="M78.3 456.05 L81.3 459.05 L84.3 456.05" fill="none" stroke="#3c3c3c" stroke-width="1.1"/><rect x="72.4" y="133.4" width="3.8" height="10.8" fill="#fffdf2" stroke="#c4a132" stroke-width="0.9"/><path d="M92.8 108.75 V498.50" stroke="#c8c8c8" stroke-width="1" stroke-dasharray="2.2 1.4"/><path d="M115.0 182.25 V498.50" stroke="#c8c8c8" stroke-width="1" stroke-dasharray="2.2 1.4"/><path d="M137.2 194.50 V353.25" stroke="#c8c8c8" stroke-width="1" stroke-dasharray="2.2 1.4"/><path d="M137.2 366.00 V498.50" stroke="#c8c8c8" stroke-width="1" stroke-dasharray="2.2 1.4"/><path d="M159.4 390.50 V439.00" stroke="#c8c8c8" stroke-width="1" stroke-dasharray="2.2 1.4"/><path d="M159.4 464.00 V488.00" stroke="#c8c8c8" stroke-width="1" stroke-dasharray="2.2 1.4"/><path d="M181.4 402.75 V426.75" stroke="#c8c8c8" stroke-width="1" stroke-dasharray="2.2 1.4"/></svg>
<!-- find -->
<div class="abs" style="left:801.8px;top:97.4px;width:200.6px;height:41.8px;background:#e6ebfa;border-left:1px solid #cdd5ee;border-bottom:2.6px solid #43548f;box-shadow:0 0.6px 1px rgba(60,80,140,.5)"></div>
<div class="abs" style="left:818.00px;top:100.00px;width:130.60px;height:16.30px;background:#f7f8fd;"></div>
<div class="abs" style="left:949.60px;top:100.00px;width:8.70px;height:16.30px;background:#f0f3fc;"></div>
<div class="abs" style="left:948.70px;top:100.00px;width:1.00px;height:16.30px;background:#8a8fa3;"></div>
<svg style="left:806.90px;top:106.90px;" width="6.00" height="4.10" viewBox="0 0 6.00 4.10"><path d="M0.5 0.5 L3 3.2 L5.5 0.5" fill="none" stroke="#1e1e1e" stroke-width="1.5"/></svg>
<span class="t" style="top:102px;font-size:9.30px;color:#262626;left:821.93px;transform:scaleX(0.8862);">Apply_b_Patch</span>
<svg style="left:939.80px;top:106.00px;" width="5.80" height="5.60" viewBox="0 0 5.80 5.60"><path d="M0.4 0.4 L5.4 5.2 M5.4 0.4 L0.4 5.2" stroke="#1e1e1e" stroke-width="1.1"/></svg>
<svg style="left:952.00px;top:107.30px;" width="4.00" height="2.20" viewBox="0 0 4.00 2.20"><polygon points="0,0 4.00,0 2.00,2.20" fill="#262626"/></svg>
<svg style="left:963.50px;top:105.20px;" width="8.70" height="6.80" viewBox="0 0 8.70 6.80"><path d="M0 3.4 H8 M4.8 0.4 L8 3.4 L4.8 6.4" fill="none" stroke="#2b2b2b" stroke-width="1.3"/></svg>
<svg style="left:977.90px;top:107.30px;" width="4.40" height="2.20" viewBox="0 0 4.40 2.20"><polygon points="0,0 4.40,0 2.20,2.20" fill="#262626"/></svg>
<svg style="left:990.00px;top:105.60px;" width="7.00" height="6.40" viewBox="0 0 7.00 6.40"><path d="M0.4 0.4 L6.6 6 M6.6 0.4 L0.4 6" stroke="#1e1e1e" stroke-width="1.2"/></svg>
<div class="abs" style="left:760.30px;top:97.50px;width:1.00px;height:10.50px;background:#111;"></div>
<span class="t" style="top:121px;font-size:9.80px;color:#3a3a3a;font-weight:bold;left:819.61px;transform:scaleX(0.8847);">Aa</span>
<span class="t" style="top:120px;font-size:8.40px;color:#555;left:837.66px;transform:scaleX(0.8635);">Ab</span>
<div class="abs" style="left:837.30px;top:122.20px;width:10.30px;height:0.80px;background:#7d7d85;"></div>
<div class="abs" style="left:837.30px;top:130.00px;width:10.30px;height:0.80px;background:#7d7d85;"></div>
<div class="abs" style="left:846.60px;top:123.60px;width:0.80px;height:6.00px;background:#7d7d85;"></div>
<div class="abs" style="left:855.00px;top:127.80px;width:2.20px;height:2.20px;background:#2b2b2b;"></div>
<svg style="left:857.80px;top:122.60px;" width="6.80" height="6.80" viewBox="0 0 6.80 6.80"><path d="M3.4 0 V6.8 M0.4 1.7 L6.4 5.1 M6.4 1.7 L0.4 5.1" stroke="#2b2b2b" stroke-width="1.1"/></svg>
<span class="t" style="top:120px;font-size:9.30px;color:#262626;left:870.23px;transform:scaleX(0.9423);">Current document</span>
<svg style="left:978.90px;top:126.00px;" width="4.10" height="2.00" viewBox="0 0 4.10 2.00"><polygon points="0,0 4.10,0 2.05,2.00" fill="#262626"/></svg>
<svg style="left:803.00px;top:130.00px;" width="6.00" height="5.00" viewBox="0 0 6.00 5.00"><rect x="0.6" y="0" width="0.9" height="0.9" fill="#8e9bbc"/><rect x="0.6" y="2" width="0.9" height="0.9" fill="#8e9bbc"/><rect x="2.6" y="2" width="0.9" height="0.9" fill="#8e9bbc"/><rect x="0.6" y="4" width="0.9" height="0.9" fill="#8e9bbc"/><rect x="2.6" y="4" width="0.9" height="0.9" fill="#8e9bbc"/><rect x="4.6" y="4" width="0.9" height="0.9" fill="#8e9bbc"/></svg>
<!-- vscroll -->
<div class="abs" style="left:1003.30px;top:97.00px;width:14.70px;height:401.20px;background:#e8e8ec;"></div>
<svg style="left:1007.00px;top:102.40px;" width="7.00" height="3.60" viewBox="0 0 7.00 3.60"><polygon points="0,3.60 7.00,3.60 3.50,0" fill="#9a9cab"/></svg>
<svg style="left:1007.40px;top:489.00px;" width="6.80" height="4.00" viewBox="0 0 6.80 4.00"><polygon points="0,0 6.8,0 3.4,4" fill="#9a9cab"/></svg>
<div class="abs" style="left:1013.30px;top:111.60px;width:4.30px;height:2.60px;background:#b4b4ba;"></div>
<div class="abs" style="left:1013.30px;top:116.20px;width:4.70px;height:4.80px;background:#129412;"></div>
<div class="abs" style="left:1013.30px;top:132.60px;width:4.70px;height:5.20px;background:#129412;"></div>
<div class="abs" style="left:1013.30px;top:151.00px;width:4.70px;height:4.80px;background:#129412;"></div>
<div class="abs" style="left:1008.70px;top:153.80px;width:4.20px;height:4.80px;background:#f2ad3c;"></div>
<div class="abs" style="left:1013.30px;top:186.40px;width:4.30px;height:4.90px;background:#b4b4ba;"></div>
<div class="abs" style="left:1013.30px;top:279.60px;width:4.70px;height:9.40px;background:#129412;"></div>
<div class="abs" style="left:1013.40px;top:319.00px;width:4.40px;height:15.00px;background:#bcbcc2;"></div>
<div class="abs" style="left:1013.30px;top:364.00px;width:4.70px;height:5.30px;background:#129412;"></div>
<div class="abs" style="left:1013.30px;top:369.30px;width:4.30px;height:5.30px;background:#b4b4ba;"></div>
<div class="abs" style="left:1004.2px;top:375.6px;width:4px;height:4.4px;border:1px solid #d59a2a;background:#fff8e0"></div>
<div class="abs" style="left:1007.80px;top:382.40px;width:5.00px;height:6.40px;background:#f2ad3c;"></div>
<div class="abs" style="left:1013.30px;top:384.00px;width:4.30px;height:3.80px;background:#b4b4ba;"></div>
<div class="abs" style="left:1002.80px;top:382.20px;width:15.20px;height:1.60px;background:#2a2ac8;"></div>
<div class="abs" style="left:1013.30px;top:403.40px;width:4.30px;height:4.60px;background:#b4b4ba;"></div>
<div class="abs" style="left:1013.30px;top:450.40px;width:4.30px;height:4.60px;background:#b4b4ba;"></div>
<div class="abs" style="left:1013.30px;top:467.00px;width:4.30px;height:4.70px;background:#b4b4ba;"></div>
<!-- edbar -->
<div class="abs" style="left:6.00px;top:498.20px;width:1012.00px;height:13.80px;background:#e6e7ed;"></div>
<div class="abs" style="left:6px;top:498.2px;width:48px;height:13.6px;background:#f5f7fd;border:1px solid #a9b5d8;border-top-color:#c4cde6"></div>
<span class="t" style="top:500px;font-size:9.80px;color:#262626;left:8.01px;transform:scaleX(0.8633);">90 %</span>
<svg style="left:46.90px;top:504.40px;" width="4.60" height="2.30" viewBox="0 0 4.60 2.30"><polygon points="0,0 4.60,0 2.30,2.30" fill="#262626"/></svg>
<svg style="left:56.90px;top:500.40px;" width="8.50" height="9.50" viewBox="0 0 8.50 9.50"><path d="M4.6 0.5 Q7.9 0.7 8 4 V6.4 Q7.6 9 4.8 9 H2.6 L3.4 7.4 Q1.6 6.6 1.8 4 L0.4 4.4 Q1.2 0.6 4.6 0.5Z" fill="#e9dcf7" stroke="#8a4fd0" stroke-width="0.9"/><path d="M4 3 Q5 2.2 6 3 M5 3.6 V5.6" fill="none" stroke="#8a4fd0" stroke-width="0.8"/></svg>
<div class="abs" style="left:90.2px;top:500.6px;width:8.9px;height:8.9px;border-radius:50%;background:#d42424"></div>
<svg style="left:92.40px;top:502.80px;" width="4.50" height="4.50" viewBox="0 0 4.50 4.50"><path d="M0.4 0.4 L4.1 4.1 M4.1 0.4 L0.4 4.1" stroke="#fff" stroke-width="1"/></svg>
<span class="t" style="top:500px;font-size:9.80px;color:#262626;left:103.11px;transform:scaleX(0.9695);">0</span>
<svg style="left:126.90px;top:500.80px;" width="9.40" height="9.10" viewBox="0 0 9.40 9.10"><path d="M4.7 0.3 L9.2 8.8 H0.2 Z" fill="#c09320"/><path d="M4.7 3 V6" stroke="#fff" stroke-width="1"/><rect x="4.2" y="6.8" width="1" height="1" fill="#fff"/></svg>
<span class="t" style="top:500px;font-size:9.80px;color:#262626;left:140.01px;transform:scaleX(0.9254);">99+</span>
<svg style="left:171.20px;top:501.00px;" width="7.00" height="9.00" viewBox="0 0 7.00 9.00"><path d="M3.5 0.6 V9 M0.4 3.8 L3.5 0.6 L6.6 3.8" fill="none" stroke="#4a4a4a" stroke-width="1"/></svg>
<svg style="left:194.40px;top:501.00px;" width="7.00" height="9.00" viewBox="0 0 7.00 9.00"><path d="M3.5 0 V8.4 M0.4 5.2 L3.5 8.4 L6.6 5.2" fill="none" stroke="#4a4a4a" stroke-width="1"/></svg>
<div class="abs" style="left:214.80px;top:500.40px;width:1.00px;height:9.40px;background:#c4c6d0;"></div>
<svg style="left:226.80px;top:499.80px;" width="10.20" height="10.20" viewBox="0 0 10.20 10.20"><path d="M9.6 0.4 L6 4.6" stroke="#4a4a4a" stroke-width="1.5"/><path d="M4.4 3.6 L7.4 6.2 L3.4 9.8 L0.4 7.4 Z" fill="#f3e3bf" stroke="#b98838" stroke-width="0.9"/><circle cx="1.6" cy="2.6" r="0.7" fill="#1f78c8"/><circle cx="3.4" cy="1" r="0.7" fill="#1f78c8"/><circle cx="4" cy="2.6" r="0.6" fill="#1f78c8"/></svg>
<svg style="left:240.60px;top:503.60px;" width="5.00" height="3.00" viewBox="0 0 5.00 3.00"><polygon points="0,0 5.00,0 2.50,3.00" fill="#262626"/></svg>
<svg style="left:270.00px;top:502.00px;" width="4.20" height="6.60" viewBox="0 0 4.20 6.60"><polygon points="4.2,0 4.2,6.6 0,3.3" fill="#8a8fa0"/></svg>
<div class="abs" style="left:279.00px;top:501.30px;width:413.80px;height:7.40px;background:#c2c3c9;"></div>
<svg style="left:827.20px;top:502.00px;" width="4.00" height="6.60" viewBox="0 0 4.00 6.60"><polygon points="0,0 0,6.6 4,3.3" fill="#8a8fa0"/></svg>
<span class="t" style="top:500px;font-size:9.80px;color:#262626;left:853.61px;transform:scaleX(0.8934);">Ln: 1434</span>
<span class="t" style="top:500px;font-size:9.80px;color:#262626;left:901.61px;transform:scaleX(0.8968);">Ch: 123</span>
<span class="t" style="top:500px;font-size:9.80px;color:#262626;left:946.21px;transform:scaleX(0.8759);">MIXED</span>
<span class="t" style="top:500px;font-size:9.80px;color:#262626;left:991.21px;transform:scaleX(0.7731);">CRLF</span>
<!-- status -->
<div class="abs" style="left:0.00px;top:517.90px;width:1024.00px;height:19.50px;background:#40508d;"></div>
<svg style="left:3.00px;top:521.60px;" width="13.20" height="12.60" viewBox="0 0 13.20 12.60"><path d="M0.6 0.6 H12.4 V9.4 H7.6 L6 11.6 L4.4 9.4 H0.6 Z" fill="#4d5d98" stroke="#eef1fa" stroke-width="1"/></svg>
<span class="t" style="top:523px;font-size:9.80px;color:#ffffff;left:22.41px;transform:scaleX(0.9172);">Ready</span>
<svg style="left:741.50px;top:522.40px;" width="8.20" height="10.20" viewBox="0 0 8.20 10.20"><path d="M4.1 0.6 V10.2 M0.5 4.2 L4.1 0.6 L7.7 4.2" fill="none" stroke="#fff" stroke-width="1"/></svg>
<span class="t" style="top:523px;font-size:9.80px;color:#ffffff;left:757.91px;transform:scaleX(0.9861);">Add to Source Control</span>
<svg style="left:857.60px;top:526.60px;" width="6.40" height="3.30" viewBox="0 0 6.40 3.30"><polygon points="0,3.30 6.40,3.30 3.20,0" fill="#ffffff"/></svg>
<svg style="left:882.20px;top:522.80px;" width="11.60" height="11.00" viewBox="0 0 11.60 11.00"><path d="M0.5 0.6 H11.1 V3 H0.5 Z M1.6 3 V10.4 H10 V3" fill="none" stroke="#fff" stroke-width="1"/><path d="M4 4.6 V8.4 H7.6 V4.6 M4 6.4 H7.6" fill="none" stroke="#fff" stroke-width="1"/></svg>
<span class="t" style="top:523px;font-size:9.80px;color:#ffffff;left:899.11px;transform:scaleX(0.9411);">Select Repository</span>
<svg style="left:977.00px;top:526.60px;" width="6.00" height="3.30" viewBox="0 0 6.00 3.30"><polygon points="0,3.30 6.00,3.30 3.00,0" fill="#ffffff"/></svg>
<svg style="left:1000.60px;top:524.80px;" width="7.40" height="8.20" viewBox="0 0 7.40 8.20"><path d="M0.5 0.5 V5.6 H3 L4.4 7.4" fill="none" stroke="#fff" stroke-width="1"/></svg>
<div class="abs" style="left:1006.4px;top:527.6px;width:9.4px;height:9.4px;border-radius:50%;background:#d42424"></div>
<span class="t" style="top:527px;font-size:6.60px;color:#ffffff;font-weight:bold;left:1009.34px;transform:scaleX(0.9066);">1</span>
<!-- taskbar -->
<div class="abs" style="left:0;top:537px;width:1024px;height:1px;background:#8e8fae"></div><div class="abs" style="left:0;top:538px;width:1024px;height:38px;background:linear-gradient(90deg,#eddcd6 0%,#eeddd8 16%,#f0dee2 28%,#f1dfec 40%,#f0dfee 60%,#f0dee6 70%,#eeddd9 78%,#eddcd7 100%)"></div>
<svg style="left:16.00px;top:549.40px;" width="19.60" height="12.80" viewBox="0 0 19.60 12.80"><defs><linearGradient id="cl" x1="0" y1="0" x2="0" y2="1"><stop offset="0" stop-color="#86bdf0"/><stop offset="1" stop-color="#cfe2f7"/></linearGradient></defs><path d="M4.4 12.6 Q0.2 12.4 0.2 8.8 Q0.4 5.6 4 5.4 Q5 0.4 10.2 0.4 Q14.6 0.6 15.6 5 Q19.4 5.2 19.4 8.8 Q19.2 12.4 15.4 12.6 Z" fill="url(#cl)"/></svg>
<div class="abs" style="left:25.00px;top:543.10px;width:12.40px;height:12.40px;border-radius:50%;background:#d3221f;"></div>
<span class="t" style="top:543px;font-size:9.00px;color:#fff;font-weight:bold;left:28.54px;transform:scaleX(1.0628);">5</span>
<svg style="left:219.00px;top:547.60px;" width="18.80" height="18.80" viewBox="0 0 18.80 18.80"><defs><linearGradient id="wl" x1="0" y1="0" x2="1" y2="1"><stop offset="0" stop-color="#55c6f8"/><stop offset="1" stop-color="#0a6fd0"/></linearGradient></defs><path d="M0 0 H8.9 V8.9 H0 Z M9.9 0 H18.8 V8.9 H9.9 Z M0 9.9 H8.9 V18.8 H0 Z M9.9 9.9 H18.8 V18.8 H9.9 Z" fill="url(#wl)"/></svg>
<div class="abs" style="left:249.8px;top:544.3px;width:173.2px;height:25.1px;border-radius:12.5px;background:#fbf6f8;border:0.8px solid #e3d3d6;box-shadow:0 0.6px 0.8px rgba(120,90,90,.25)"></div>
<svg style="left:257.60px;top:550.40px;" width="12.60" height="12.60" viewBox="0 0 12.60 12.60"><circle cx="5.5" cy="5.4" r="4.3" fill="none" stroke="#222" stroke-width="1.4"/><path d="M8.6 8.6 L11.8 11.8" stroke="#222" stroke-width="1.6" stroke-linecap="round"/></svg>
<span class="t" style="top:551px;font-size:11.60px;color:#5a5a5a;left:278.34px;transform:scaleX(0.9013);">Search</span>
<svg style="left:386.00px;top:548.00px;" width="26.40" height="17.40" viewBox="0 0 26.40 17.40"><ellipse cx="17" cy="12.8" rx="8.6" ry="4.2" fill="#c9bca8"/><ellipse cx="17" cy="12" rx="8.4" ry="3.8" fill="#d8cdbb"/><ellipse cx="16.6" cy="6.8" rx="6" ry="2.6" fill="#9bb04a"/><ellipse cx="16.4" cy="6.4" rx="4.6" ry="1.8" fill="#c3b27a"/><ellipse cx="16.8" cy="2.4" rx="3.8" ry="2.2" fill="#c69a2e"/><ellipse cx="4.6" cy="13" rx="2.4" ry="1.8" fill="#c9a046"/><ellipse cx="2.6" cy="14.4" rx="2.4" ry="1.6" fill="#5a6270"/></svg>
<div class="abs" style="left:434.00px;top:552.60px;width:14.60px;height:13.20px;background:#232326;border-radius:1.6px"></div>
<div class="abs" style="left:439.00px;top:548.00px;width:13.80px;height:12.60px;background:rgba(238,238,240,.85);border-radius:1.6px;box-shadow:0 0 0 0.5px rgba(200,200,205,.7)"></div>
<svg style="left:469.40px;top:547.60px;" width="18.80" height="17.60" viewBox="0 0 18.80 17.60"><defs><linearGradient id="cp1" x1="0" y1="0" x2="0" y2="1"><stop offset="0" stop-color="#2a8cf0"/><stop offset=".35" stop-color="#3ec28f"/><stop offset=".6" stop-color="#f3c52f"/><stop offset="1" stop-color="#f0563a"/></linearGradient><linearGradient id="cp2" x1="0" y1="0" x2="0" y2="1"><stop offset="0" stop-color="#5b4fe0"/><stop offset=".4" stop-color="#c36be0"/><stop offset="1" stop-color="#f08a6a"/></linearGradient></defs><path d="M5.6 0.6 H12 Q14 0.8 13.4 3 L10.6 14.4 Q10 17 7.6 17 H5 Q7 16.6 7.4 14.8 L8 12 H3 Q0 11.6 0.8 8.6 L2.4 3 Q3.2 0.6 5.6 0.6Z" fill="url(#cp1)"/><path d="M13 0.8 Q15 1 15.6 3 L16 5 H16.4 Q19.2 5.4 18.4 8.4 L16.8 14.2 Q16 17 13.4 17 H7 Q9.6 16.8 10.2 14.4 L11.6 9 L13 3.4 Q13.6 1.4 13 0.8Z" fill="url(#cp2)"/><ellipse cx="9.6" cy="9" rx="2.1" ry="4.4" fill="#f7eef4" transform="rotate(14 9.6 9)"/></svg>
<svg style="left:504.00px;top:546.40px;" width="20.00" height="20.20" viewBox="0 0 20.00 20.20"><defs><linearGradient id="eg" x1="0" y1="0" x2="1" y2="0"><stop offset="0" stop-color="#2aa7e0"/><stop offset="1" stop-color="#55c873"/></linearGradient></defs><circle cx="10" cy="10.1" r="9.8" fill="#1b68bd"/><path d="M0.6 8 Q2.4 0.4 10.4 0.3 Q17.6 0.6 19.6 7.6 Q19.8 12 15.4 12.4 H9.6 Q10.8 9.6 9.8 8 Q6 4.6 0.6 8Z" fill="url(#eg)"/><path d="M6.6 11.4 Q6.4 8.4 9.4 7.8 Q12 7.8 12.2 10 Q12 11.6 10.4 12.6 Q14 13.6 17.4 11.6 Q15.4 16.6 10.8 15.8 Q7 15 6.6 11.4Z" fill="#f4eef4"/><path d="M1 13.6 Q3.6 20 10.6 19.8 Q6 18 6.4 12.2 Q4 10.8 2.4 11.6 Z" fill="#1553a0"/></svg>
<svg style="left:539.70px;top:548.20px;" width="19.50" height="17.60" viewBox="0 0 19.50 17.60"><path d="M0.4 2 Q0.4 0.4 2 0.4 H6.4 L8.4 2.4 H17.6 Q19.2 2.4 19.2 4 V16 Q19.2 17.4 17.8 17.4 H1.8 Q0.4 17.4 0.4 16 Z" fill="#fcc53a"/><path d="M0.4 2 Q0.4 0.4 2 0.4 H6.4 L8.2 2.2 L6.6 3.8 H0.4 Z" fill="#e3a32a"/><path d="M3.4 17.4 V14 Q3.4 12 5.4 12 H14 Q16 12 16 14 V17.4 Z" fill="#1a7fd6"/><rect x="6" y="14" width="7.4" height="1.4" rx="0.7" fill="#0b57a8"/></svg>
<div class="abs" style="left:546.80px;top:570.00px;width:5.40px;height:2.00px;background:#8a8a8e;border-radius:1px"></div>
<svg style="left:575.00px;top:547.40px;" width="18.80" height="18.80" viewBox="0 0 18.80 18.80"><path d="M5.2 3.6 V2 Q5.2 0.6 6.6 0.6 H12.2 Q13.6 0.6 13.6 2 V3.6" fill="none" stroke="#3fa9f0" stroke-width="1.1"/><path d="M0.4 3.4 H18.4 V16.4 Q18.4 18.4 16.4 18.4 H2.4 Q0.4 18.4 0.4 16.4 Z" fill="#173f7c"/><rect x="5.2" y="6.6" width="3.8" height="3.8" fill="#f04e36"/><rect x="9.8" y="6.6" width="3.8" height="3.8" fill="#7cbb3a"/><rect x="5.2" y="11.2" width="3.8" height="3.8" fill="#2aa4f0"/><rect x="9.8" y="11.2" width="3.8" height="3.8" fill="#fcc23a"/></svg>
<svg style="left:610.00px;top:549.00px;" width="19.60" height="16.00" viewBox="0 0 19.60 16.00"><path d="M7 2.6 L13.6 0.2 L19.4 3.4 V13.4 Q19.4 15.6 17.2 15.6 H7 Z" fill="#28a8ea"/><path d="M7 6 L19.4 3.4 V8 L8 12 Z" fill="#1467b8"/><path d="M7.6 15.6 L19.4 8.6 V13.6 Q19.4 15.6 17.4 15.6 Z" fill="#4fd0f8"/><rect x="0" y="3.2" width="9.6" height="9.6" rx="1" fill="#0f6cc4"/><circle cx="4.8" cy="8" r="2.4" fill="none" stroke="#fff" stroke-width="1.3"/></svg>
<svg style="left:644.80px;top:547.20px;" width="18.00" height="18.00" viewBox="0 0 18.00 18.00"><circle cx="6.8" cy="3.4" r="3" fill="#7b83eb"/><circle cx="14" cy="4.6" r="2.6" fill="#5a62d8"/><path d="M10.4 8 H17.4 Q18 8 18 8.8 V13.4 Q17.6 17 14 17.4 Q11 17.2 10.4 14.6 Z" fill="#5059c9"/><path d="M2.4 8 H11.6 Q12.4 8 12.4 8.8 V14 Q12 17.8 8 18 Q4 18 2.4 14 Z" fill="#7b83eb"/><rect x="0" y="7.2" width="9.2" height="9.2" rx="1" fill="#4b53bc"/><path d="M2.6 9.6 H6.6 M4.6 9.6 V14.4" stroke="#fff" stroke-width="1.3"/></svg>
<svg style="left:680.20px;top:546.80px;" width="19.60" height="19.60" viewBox="0 0 19.60 19.60"><circle cx="9.8" cy="9.8" r="9.6" fill="#fbc116"/><path d="M9.8 9.8 L1.5 5 A9.6 9.6 0 0 1 18.1 5 Z" fill="#e33b2e"/><path d="M9.8 9.8 L1.5 5 A9.6 9.6 0 0 0 9.8 19.4 L14 12.2 Z" fill="#2ba24c"/><path d="M9.8 0.2 A9.6 9.6 0 0 1 18.1 5 H9.8 Z" fill="#e33b2e"/><circle cx="9.8" cy="9.8" r="4.6" fill="#fff"/><circle cx="9.8" cy="9.8" r="3.6" fill="#3b7fe8"/></svg>
<div class="abs" style="left:691.30px;top:543.60px;width:12.40px;height:12.40px;border-radius:50%;background:#8a55c8;"></div>
<span class="t" style="top:544px;font-size:7.60px;color:#fff;font-weight:bold;left:694.70px;transform:scaleX(1.0217);">C</span>
<div class="abs" style="left:688.00px;top:570.00px;width:4.60px;height:2.00px;background:#8a8a8e;border-radius:1px"></div>
<svg style="left:715.60px;top:547.00px;" width="19.40" height="19.40" viewBox="0 0 19.40 19.40"><defs><linearGradient id="mp" x1="0" y1="0" x2="0" y2="1"><stop offset="0" stop-color="#f08a3a"/><stop offset="1" stop-color="#9a55d8"/></linearGradient></defs><circle cx="9.7" cy="9.7" r="9.5" fill="url(#mp)"/><circle cx="9.7" cy="9.7" r="8.2" fill="#28282e"/><polygon points="6.8,5.2 14.2,9.7 6.8,14.2" fill="#f2f2f2"/></svg>
<div class="abs" style="left:746.00px;top:542.30px;width:29.00px;height:30.00px;background:#f7eff1;border-radius:3px;box-shadow:0 0 0 0.5px rgba(220,200,205,.8)"></div>
<svg style="left:750.60px;top:547.00px;" width="19.80" height="19.00" viewBox="0 0 19.80 19.00"><path d="M14 0.2 L19.6 2.6 V16.4 L14 18.8 L5.4 11.6 L2 14.2 L0.2 13.2 V5.8 L2 4.8 L5.4 7.4 Z M14 5.6 L9.4 9.5 L14 13.4 Z M1.9 7.4 V11.6 L4 9.5 Z" fill="#8e5fd0" fill-rule="evenodd"/><path d="M14 0.2 L19.6 2.6 V16.4 L14 18.8 Z" fill="#b48af0"/><path d="M5.4 7.4 L14 0.2 V5.6 L2 14.2 L0.2 13.2 Z" fill="#6d45b4" opacity=".75"/></svg>
<div class="abs" style="left:754.00px;top:569.90px;width:13.00px;height:2.10px;background:#1a78d8;border-radius:1px"></div>
<svg style="left:786.20px;top:548.20px;" width="19.00" height="16.80" viewBox="0 0 19.00 16.80"><rect x="1.4" y="0.6" width="14.6" height="10.8" fill="#1688e0"/><rect x="0" y="11.2" width="19" height="1.4" fill="#0c5fb0"/><rect x="4.2" y="3" width="7.6" height="9.8" fill="#38b4f4"/><rect x="4.2" y="12.6" width="7.6" height="3.8" fill="#0f64c0"/></svg>
<div class="abs" style="left:796.80px;top:543.60px;width:12.60px;height:12.60px;border-radius:50%;background:#1478d4;"></div>
<span class="t" style="top:543px;font-size:8.80px;color:#fff;left:800.45px;transform:scaleX(1.0837);">6</span>
<svg style="left:871.00px;top:554.20px;" width="9.00" height="4.80" viewBox="0 0 9.00 4.80"><path d="M0.6 4.4 L4.5 0.7 L8.4 4.4" fill="none" stroke="#222" stroke-width="1.2"/></svg>
<svg style="left:894.60px;top:552.00px;" width="12.40" height="9.20" viewBox="0 0 12.40 9.20"><path d="M0.4 3.4 Q6.2 -2 12 3.4 M2.4 5.4 Q6.2 2 10 5.4 M4.3 7.2 Q6.2 5.6 8.1 7.2" fill="none" stroke="#222" stroke-width="1"/><circle cx="6.2" cy="8.4" r="0.8" fill="#222"/></svg>
<svg style="left:913.00px;top:551.40px;" width="13.60" height="10.40" viewBox="0 0 13.60 10.40"><path d="M0.6 3.6 H2.6 L5.4 1 V9.4 L2.6 6.8 H0.6 Z" fill="none" stroke="#222" stroke-width="1"/><path d="M7.4 3.4 Q8.6 5.2 7.4 7 M9.4 2 Q11.4 5.2 9.4 8.4 M11.4 0.6 Q14.4 5.2 11.4 9.8" fill="none" stroke="#222" stroke-width="0.9"/></svg>
<svg style="left:933.00px;top:553.00px;" width="13.20" height="7.80" viewBox="0 0 13.20 7.80"><rect x="0.6" y="0.6" width="10.6" height="6.6" rx="1.4" fill="none" stroke="#222" stroke-width="1"/><rect x="2" y="2" width="3.8" height="3.8" fill="#222"/><path d="M12.2 2.6 V5.2" stroke="#222" stroke-width="1.4"/></svg>
<span class="t" style="top:545px;font-size:10.10px;color:#222;left:973.50px;transform:scaleX(0.9334);">4:48 PM</span>
<span class="t" style="top:557px;font-size:10.10px;color:#222;left:958.60px;transform:scaleX(0.9679);">2026-01-07</span>
<div class="abs" style="left:1018.60px;top:550.30px;width:1.00px;height:12.50px;background:#8d8788;"></div>
<!-- tooltip -->
<div class="abs" style="left:947.8px;top:503.6px;width:75.4px;height:23.6px;background:#e9eaf3;border-radius:3.4px;box-shadow:0 0 0 0.6px rgba(110,120,150,.35),0 1.5px 3px rgba(20,30,70,.35)"></div>
<span class="t" style="top:510px;font-size:10.10px;color:#333333;left:954.40px;transform:scaleX(0.9726);">Show desktop</span>
</div>
</body>
</html>
